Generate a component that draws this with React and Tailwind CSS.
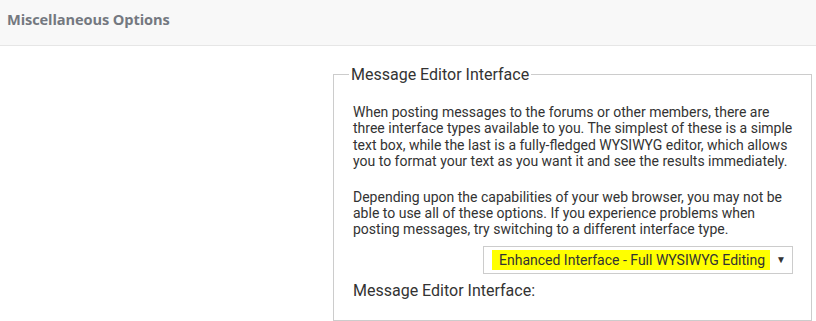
export default function App() {
  return (
    <div className="w-[816px] h-[321px] bg-white overflow-hidden">
      <div className="h-[46px] bg-[#f8f8f8] border-b border-[#e6e6e6] flex items-start pl-[7px] pt-[9px]">
        <span className="font-['Open_Sans',sans-serif] font-bold text-[14.6px] text-[#747880] tracking-[-0.1px]">
          Miscellaneous Options
        </span>
      </div>
      <div className="pl-[333px] pr-[4px] pt-[19px]">
        <fieldset className="border border-[#cccccc] pl-[19px] pr-[14px] h-[256px] font-['Roboto',sans-serif] text-[#333333]">
          <legend className="ml-[-4px] px-[2px] text-[16px] leading-[19px] text-[#333]">Message Editor Interface</legend>
          <p className="mt-[20px] text-[14px] leading-[16.4px] w-[444px]">
            When posting messages to the forums or other members, there are three interface types available to you. The simplest of these is a simple text box, while the last is a fully-fledged WYSIWYG editor, which allows you to format your text as you want it and see the results immediately.
          </p>
          <p className="mt-[19px] text-[14px] leading-[16.4px] w-[444px]">
            Depending upon the capabilities of your web browser, you may not be able to use all of these options. If you experience problems when posting messages, try switching to a different interface type.
          </p>
          <div className="flex justify-end mt-[8px] pr-[4px]">
            <div className="w-[310px] h-[28px] border border-[#cccccc] flex items-center pl-[8px] pr-[6px]">
              <span className="bg-[#ffff00] h-[20px] leading-[20px] pl-[7px] pr-[5px] text-[14px] text-[#333] whitespace-nowrap">Enhanced Interface - Full WYSIWYG Editing</span>
              <span className="ml-auto text-[10px] text-[#333]">▼</span>
            </div>
          </div>
          <div className="mt-[7px] text-[16px] leading-[19px]">Message Editor Interface:</div>
        </fieldset>
      </div>
    </div>
  );
}
